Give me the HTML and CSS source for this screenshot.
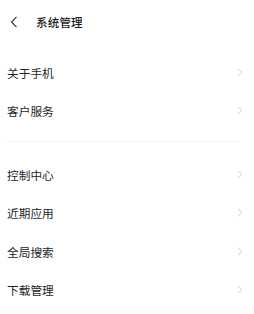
FILE: index.html
```html
<!DOCTYPE html>
<html lang="zh-CN">
<head>
<meta charset="utf-8">
<link rel="stylesheet" href="styles.css">
</head>
<body>
<div class="page">
  <header class="header">
    <svg class="back" width="8" height="12" viewBox="0 0 8 12"><path d="M6.5 0.8 L1.5 6 L6.5 11.2" fill="none" stroke="#333" stroke-width="1.1"/></svg>
    <span class="title">系统管理</span>
  </header>
  <section class="group first">
    <div class="row"><span class="label">关于手机</span><svg class="arrow" width="6" height="9" viewBox="0 0 6 9"><path d="M1 0.8 L4.8 4.5 L1 8.2" fill="none" stroke="#cfcfcf" stroke-width="1"/></svg></div>
    <div class="row"><span class="label">客户服务</span><svg class="arrow" width="6" height="9" viewBox="0 0 6 9"><path d="M1 0.8 L4.8 4.5 L1 8.2" fill="none" stroke="#cfcfcf" stroke-width="1"/></svg></div>
  </section>
  <div class="divider"></div>
  <section class="group second">
    <div class="row"><span class="label">控制中心</span><svg class="arrow" width="6" height="9" viewBox="0 0 6 9"><path d="M1 0.8 L4.8 4.5 L1 8.2" fill="none" stroke="#cfcfcf" stroke-width="1"/></svg></div>
    <div class="row"><span class="label">近期应用</span><svg class="arrow" width="6" height="9" viewBox="0 0 6 9"><path d="M1 0.8 L4.8 4.5 L1 8.2" fill="none" stroke="#cfcfcf" stroke-width="1"/></svg></div>
    <div class="row"><span class="label">全局搜索</span><svg class="arrow" width="6" height="9" viewBox="0 0 6 9"><path d="M1 0.8 L4.8 4.5 L1 8.2" fill="none" stroke="#cfcfcf" stroke-width="1"/></svg></div>
    <div class="row"><span class="label">下载管理</span><svg class="arrow" width="6" height="9" viewBox="0 0 6 9"><path d="M1 0.8 L4.8 4.5 L1 8.2" fill="none" stroke="#cfcfcf" stroke-width="1"/></svg></div>
  </section>
  <div class="footer"></div>
</div>
</body>
</html>
```
FILE: styles.css
```css
html, body {
  margin: 0;
  padding: 0;
  background: #ffffff;
}
body {
  font-family: "Noto Sans CJK SC", "Noto Sans", sans-serif;
  color: #1e1e1e;
  width: 254px;
  height: 314px;
  overflow: hidden;
}
.page {
  display: flex;
  flex-direction: column;
  height: 314px;
}
.header {
  height: 44px;
  display: flex;
  align-items: center;
  padding-left: 10px;
  gap: 18px;
}
.back {
  display: block;
}
.title {
  font-size: 11.5px;
  font-weight: 500;
  letter-spacing: 0.2px;
}
.group.first {
  margin-top: 9px;
}
.row {
  height: 38.5px;
  display: flex;
  align-items: center;
  justify-content: space-between;
  padding: 0 11px 0 7px;
}
.label {
  font-size: 11.7px;
  letter-spacing: 0;
}
.arrow {
  display: block;
}
.divider {
  height: 1px;
  background: #f2f2f2;
  margin: 11px 14px 13px 7px;
}
.footer {
  flex: 1;
  background: #fffdf6;
}
```
